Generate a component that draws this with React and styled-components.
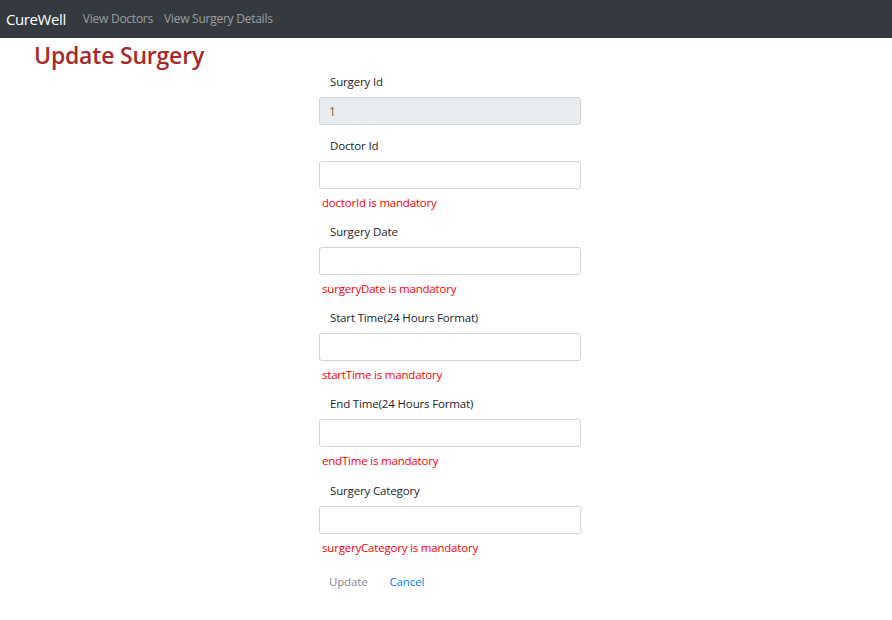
import React from 'react';
import styled, { createGlobalStyle } from 'styled-components';

const GlobalStyle = createGlobalStyle`
  body {
    margin: 0;
    font-family: "Open Sans", "Noto Sans", sans-serif;
    background: #fff;
    color: #212529;
  }
  * { box-sizing: border-box; }
`;

const NavBar = styled.nav`
  height: 38px;
  background: #343a40;
  display: flex;
  align-items: center;
  padding: 0 6px 1px;
`;

const Brand = styled.a`
  color: #fff;
  font-size: 15px;
  margin-right: 17px;
  letter-spacing: -0.4px;
`;

const NavLink = styled.a`
  color: rgba(255, 255, 255, 0.5);
  font-size: 12px;
  margin-right: 11px;
  letter-spacing: -0.25px;
`;

const Title = styled.h3`
  margin: 2px 0 0 34px;
  color: #a52a2a;
  font-size: 23px;
  font-weight: 600;
  line-height: 30px;
  letter-spacing: -0.2px;
`;

const Form = styled.form`
  width: 262px;
  margin: 3px 0 0 319px;
  display: flex;
  flex-direction: column;
`;

const Field = styled.div`
  display: flex;
  flex-direction: column;
  margin-bottom: ${({ $gap }) => $gap}px;
`;

const Label = styled.label`
  font-size: 11.5px;
  padding-left: 11px;
  line-height: 18px;
  margin-bottom: 6px;
  letter-spacing: -0.15px;
`;

const Input = styled.input`
  height: 28px;
  width: 100%;
  border: 1px solid #ced4da;
  border-radius: 3px;
  padding: 0 9px;
  font-size: 12px;
  font-family: inherit;
  background: ${({ disabled }) => (disabled ? '#e9ecef' : '#fff')};
  color: #8a5a50;
  outline: none;
`;

const Error = styled.div`
  color: #ff0000;
  font-size: 11.5px;
  padding-left: 3px;
  margin-top: 5px;
  line-height: 18px;
  letter-spacing: -0.2px;
`;

const Actions = styled.div`
  display: flex;
  gap: 22px;
  padding-left: 10px;
`;

const Button = styled.button`
  background: none;
  border: none;
  padding: 0;
  font-family: inherit;
  font-size: 11.5px;
  line-height: 18px;
  letter-spacing: -0.15px;
  color: ${({ $primary }) => ($primary ? '#007bff' : '#888')};
  cursor: pointer;
`;

const fields = [
  { label: 'Doctor Id', error: 'doctorId is mandatory', gap: 11 },
  { label: 'Surgery Date', error: 'surgeryDate is mandatory', gap: 11 },
  { label: 'Start Time(24 Hours Format)', error: 'startTime is mandatory', gap: 11 },
  { label: 'End Time(24 Hours Format)', error: 'endTime is mandatory', gap: 12 },
  { label: 'Surgery Category', error: 'surgeryCategory is mandatory', gap: 16 },
];

export default function App() {
  return (
    <>
      <GlobalStyle />
      <NavBar>
        <Brand>CureWell</Brand>
        <NavLink>View Doctors</NavLink>
        <NavLink>View Surgery Details</NavLink>
      </NavBar>
      <Title>Update Surgery</Title>
      <Form onSubmit={(e) => e.preventDefault()}>
        <Field $gap={12}>
          <Label>Surgery Id</Label>
          <Input value="1" disabled readOnly />
        </Field>
        {fields.map((f) => (
          <Field key={f.label} $gap={f.gap}>
            <Label>{f.label}</Label>
            <Input />
            <Error>{f.error}</Error>
          </Field>
        ))}
        <Actions>
          <Button type="button">Update</Button>
          <Button type="button" $primary>Cancel</Button>
        </Actions>
      </Form>
    </>
  );
}
